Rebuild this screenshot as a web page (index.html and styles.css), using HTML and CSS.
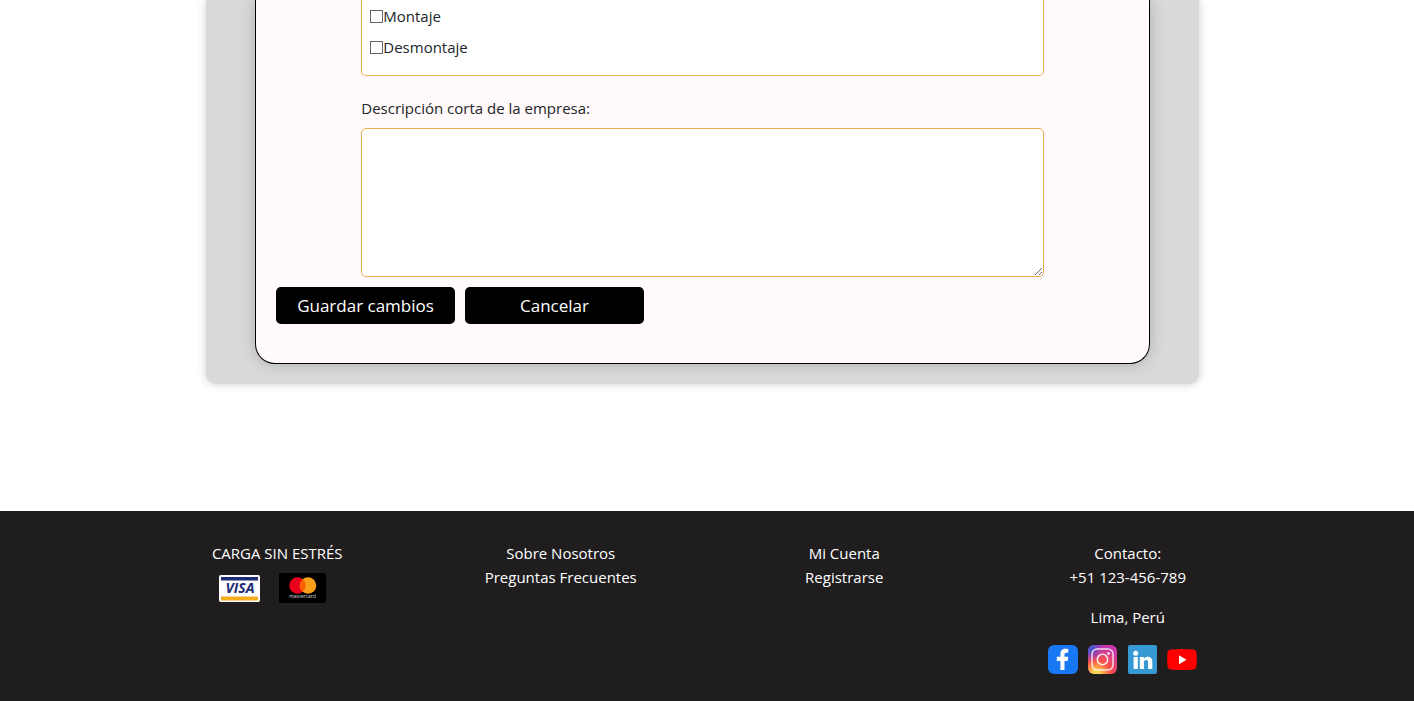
FILE: index.html
```html
<!DOCTYPE html>
<html lang="es">
<head>
<meta charset="utf-8">
<meta name="viewport" content="width=device-width, initial-scale=1">
<title>Carga sin estrés</title>
<link rel="stylesheet" href="styles.css">
</head>
<body>
<main class="main">
  <div class="panel">
    <form class="card">
      <div class="group">
        <div class="services">
          <label class="check"><input type="checkbox" name="montaje">Montaje</label>
          <label class="check"><input type="checkbox" name="desmontaje">Desmontaje</label>
        </div>
        <label class="label" for="descripcion">Descripción corta de la empresa:</label>
        <textarea class="textarea" id="descripcion" name="descripcion"></textarea>
      </div>
      <div class="actions">
        <button class="button" type="submit">Guardar cambios</button>
        <button class="button" type="button">Cancelar</button>
      </div>
    </form>
  </div>
</main>
<footer class="footer">
  <div class="columns">
    <section class="column">
      <p>CARGA SIN ESTRÉS</p>
      <div class="payments">
        <svg width="41" height="27" viewBox="0 0 41 27" role="img" aria-label="Visa">
          <rect width="41" height="27" rx="2" fill="#fff"/>
          <path d="M2 2h37v3.500H2z" fill="#1d2b74"/>
          <path d="M2 21.500h37v4H2z" fill="#f4ae1c"/>
          <text class="visa" x="21" y="18" text-anchor="middle">VISA</text>
        </svg>
        <svg width="47" height="30" viewBox="0 0 47 30" role="img" aria-label="Mastercard">
          <rect width="47" height="30" rx="2" fill="#000"/>
          <circle cx="18.500" cy="12.500" r="8.300" fill="#eb001b"/>
          <circle cx="29" cy="12.500" r="8.300" fill="#f9a01b"/>
          <path d="M23.750 6.100a8.300 8.300 0 0 1 0 12.800a8.300 8.300 0 0 1 0-12.800z" fill="#ff5f00"/>
          <text class="mastercard" x="23.500" y="25" text-anchor="middle">mastercard</text>
        </svg>
      </div>
    </section>
    <nav class="column">
      <a href="#">Sobre Nosotros</a>
      <a href="#">Preguntas Frecuentes</a>
    </nav>
    <nav class="column">
      <a href="#">Mi Cuenta</a>
      <a href="#">Registrarse</a>
    </nav>
    <section class="column">
      <p>Contacto:</p>
      <p>+51 123-456-789</p>
      <p class="city">Lima, Perú</p>
      <div class="social">
        <a href="#" aria-label="Facebook"><svg width="30" height="30" viewBox="0 0 30 30">
          <rect width="30" height="29" rx="6" fill="#1877f2"/>
          <path d="M12.400 25v-8.900H8.800v-4.300h3.600V9.300c0-3.900 2.100-5.500 5.200-5.500 1.300 0 2.300.1 2.700.2v3.800h-1.900c-1.400 0-1.900.7-1.900 1.900v2.100h3.800l-.6 4.300h-3.200V25z" fill="#fff"/>
        </svg></a>
        <a href="#" aria-label="Instagram"><svg width="30" height="30" viewBox="0 0 30 30">
          <defs>
            <radialGradient id="warm" cx="8" cy="30" r="29" gradientUnits="userSpaceOnUse">
              <stop offset="0" stop-color="#ffdc55"/><stop offset=".15" stop-color="#ffd150"/><stop offset=".5" stop-color="#fb5245"/><stop offset="1" stop-color="#c837ab"/>
            </radialGradient>
            <radialGradient id="cool" cx="0" cy="1" r="17" gradientUnits="userSpaceOnUse">
              <stop offset="0" stop-color="#3f63d8"/><stop offset=".3" stop-color="#4a55d0"/><stop offset="1" stop-color="#7a30d0" stop-opacity="0"/>
            </radialGradient>
          </defs>
          <rect width="29" height="29" rx="6" fill="url(#warm)"/>
          <rect width="29" height="29" rx="6" fill="url(#cool)"/>
          <rect x="4" y="4" width="21" height="21" rx="5" fill="none" stroke="#fff" stroke-opacity=".8" stroke-width="1.500"/>
          <circle cx="14.500" cy="14.500" r="5.200" fill="none" stroke="#fff" stroke-opacity=".85" stroke-width="1.600"/>
          <circle cx="20.500" cy="8.500" r="1.300" fill="#fff"/>
        </svg></a>
        <a href="#" aria-label="LinkedIn"><svg width="29" height="30" viewBox="0 0 29 30">
          <rect width="29" height="29" rx="2" fill="#3799d3"/>
          <circle cx="7.700" cy="8.300" r="2.500" fill="#fff"/>
          <path d="M5.600 12h4.200v12H5.600zM11.800 12h4v1.800c.7-1.200 2-2.100 3.900-2.100 3.500 0 4.600 2.300 4.600 5.400V24h-4.200v-6.200c0-1.500-.2-2.800-1.900-2.800s-2.300 1.300-2.300 2.900V24h-4.100z" fill="#fff"/>
        </svg></a>
        <a href="#" aria-label="YouTube"><svg width="30" height="30" viewBox="0 0 30 30">
          <path d="M4 4.500Q15 3.500 26 4.500Q29 4.800 29.500 8Q30.200 14.500 29.500 21Q29 24.300 26 24.600Q15 25.600 4 24.600Q1 24.300.5 21Q-.2 14.500.5 8Q1 4.800 4 4.500z" fill="#f00"/>
          <path d="M12 10.200v9l7.500-4.500z" fill="#fff"/>
        </svg></a>
      </div>
    </section>
  </div>
</footer>
</body>
</html>
```
FILE: styles.css
```css
* { box-sizing: border-box; }

body {
  display: flex;
  flex-direction: column;
  min-height: 100vh;
  margin: 0;
  background: #fff;
  color: #212529;
  font-family: "Segoe UI", "Open Sans", "Noto Sans", sans-serif;
  font-size: 15px;
  line-height: 24px;
}

p { margin: 0; }
a { color: inherit; text-decoration: none; }

.main {
  padding: 0 9px 127px 0;
}

.panel {
  max-width: 993px;
  margin: 0 auto;
  padding: 0 49px 20px;
  background: #d9d9d9;
  border-radius: 0 0 10px 10px;
  box-shadow: 0 0 10px rgba(0, 0, 0, 0.2);
}

.card {
  padding: 0 20px 39px;
  background: #fff9f9;
  border: 1px solid #000;
  border-top: 0;
  border-radius: 0 0 20px 20px;
  box-shadow: 0 0 15px rgba(0, 0, 0, 0.2);
}

.group {
  display: flex;
  flex-direction: column;
  width: 80%;
  margin: 0 auto;
}

.services {
  display: flex;
  flex-direction: column;
  gap: 7px;
  padding: 4px 8px 16px;
  background: #fff;
  border: 1px solid #e9b04f;
  border-top: 0;
  border-radius: 0 0 5px 5px;
}

.check {
  display: flex;
  align-items: center;
}

.check input {
  appearance: none;
  width: 13px;
  height: 13px;
  margin: 0;
  background: #fff;
  border: 1px solid #666;
}

.check input:checked { background: #444; }

.label {
  margin: 20px 0 8px;
}

.textarea {
  height: 149px;
  padding: 8px;
  background: #fff;
  border: 1px solid #e9b04f;
  border-radius: 5px;
  font: inherit;
  resize: vertical;
}

.actions {
  display: flex;
  gap: 10px;
  margin-top: 10px;
}

.button {
  width: 179px;
  height: 37px;
  padding: 0;
  background: #000;
  border: 0;
  border-radius: 5px;
  color: #fff;
  font: inherit;
  font-size: 17px;
}

.footer {
  flex: 1;
  padding: 30px 9px 26px 0;
  background: #201d1e;
  color: #fff;
}

.columns {
  display: grid;
  grid-template-columns: repeat(4, 1fr);
  max-width: 1134px;
  margin: 0 auto;
}

.column {
  display: flex;
  flex-direction: column;
  align-items: center;
}

.payments {
  display: flex;
  align-items: center;
  gap: 19px;
  margin-top: 8px;
  padding-right: 10px;
}

.visa {
  fill: #1d2b74;
  font: italic bold 14px "Open Sans", sans-serif;
}

.mastercard {
  fill: #ddd;
  font: 5px "Open Sans", sans-serif;
}

.city { margin: 16px 0; }

.social {
  display: flex;
  gap: 10px;
  padding-right: 10px;
}

.social a,
.social svg {
  display: block;
}
```
